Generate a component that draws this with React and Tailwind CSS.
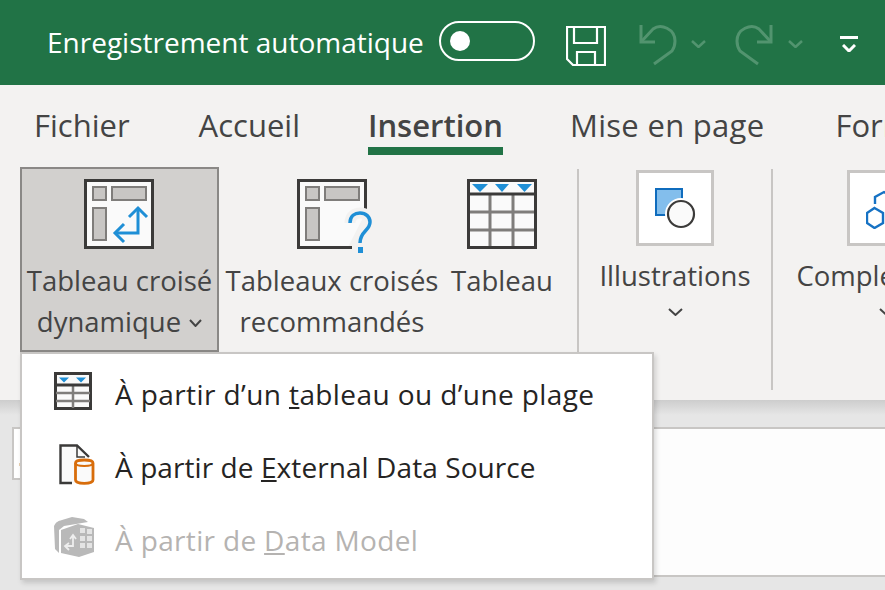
const font = "font-['Open_Sans','Noto_Sans',sans-serif]";

function Chevron({ w = 14, sw = 2, className = '' }) {
  return (
    <svg width={w} height={8} viewBox={`0 0 ${w} 8`} fill="none" stroke="currentColor" strokeWidth={sw} className={`shrink-0 ${className}`}>
      <path d={`M1 1L${w / 2} 7L${w - 1} 1`} />
    </svg>
  );
}

function SaveIcon() {
  return (
    <svg width="40" height="40" viewBox="0 0 40 40" fill="none" stroke="#fff" strokeWidth="2.2">
      <path d="M1 1H39V39H7L1 33Z" />
      <path d="M8 1V17H31V1" />
      <path d="M11 39V26H29V39" />
    </svg>
  );
}

function UndoIcon({ flip }) {
  return (
    <svg width="38" height="42" viewBox="0 0 38 42" fill="none" stroke="#52946f" strokeWidth="3" className={flip ? '-scale-x-100' : ''}>
      <path d="M2 1V18H16" />
      <path d="M2 18L14 5C22 -1 36 5 36 17C36 21 35 24 33 27L15 40" />
    </svg>
  );
}

function PivotBoxes() {
  return (
    <>
      <rect x="9" y="8" width="13" height="13" fill="#c8c6c4" stroke="#7f7d7b" strokeWidth="2" />
      <rect x="28" y="8" width="34" height="13" fill="#c8c6c4" stroke="#7f7d7b" strokeWidth="2" />
      <rect x="9" y="29" width="13" height="32" fill="#c8c6c4" stroke="#7f7d7b" strokeWidth="2" />
    </>
  );
}

function PivotIcon() {
  return (
    <svg width="70" height="70" viewBox="0 0 70 70" fill="none">
      <rect x="1.5" y="1.5" width="67" height="67" fill="#fafafa" stroke="#3b3a39" strokeWidth="3" />
      <PivotBoxes />
      <path d="M54 30V54H32" stroke="#1f8fd6" strokeWidth="3" />
      <path d="M45 38L54 29L63 38M40 45L31 54L40 63" stroke="#1f8fd6" strokeWidth="3" />
    </svg>
  );
}

function RecommendedIcon() {
  const q = 'M53 44C53 37 58 34 63 34C69 34 73 38 73 43C73 52 63 52 63 64';
  return (
    <svg width="70" height="70" viewBox="0 0 70 70" fill="none" className="overflow-visible">
      <path d="M0 0H70V31L50 70H0Z" fill="#fafafa" />
      <path d="M55 68.500H1.500V1.500H68.500V31" stroke="#3b3a39" strokeWidth="3" />
      <PivotBoxes />
      <path d={q} stroke="#f3f2f1" strokeWidth="11" />
      <path d="M63 62V74" stroke="#f3f2f1" strokeWidth="11" />
      <path d={q} stroke="#1f8fd6" strokeWidth="3.500" />
      <rect x="61" y="68" width="5" height="6" fill="#1f8fd6" />
    </svg>
  );
}

function TableIcon() {
  return (
    <svg width="70" height="70" viewBox="0 0 70 70" fill="none">
      <rect x="1.5" y="1.5" width="67" height="67" fill="#fafafa" stroke="#3b3a39" strokeWidth="3" />
      <path d="M5 5H21L13 13ZM28 5H42L35 13ZM50 5H65L57.500 13Z" fill="#1f8fd6" />
      <path d="M23 16V67M46 16V67M3 33H67M3 51H67" stroke="#7f7d7b" strokeWidth="3" />
      <path d="M2 15H68" stroke="#3b3a39" strokeWidth="3" />
    </svg>
  );
}

function ShapesIcon() {
  return (
    <svg width="42" height="42" viewBox="0 0 42 42" fill="none">
      <rect x="2" y="2" width="26" height="26" fill="#83beec" stroke="#0f6cbd" strokeWidth="2" />
      <circle cx="27" cy="27" r="16" fill="#fff" />
      <circle cx="27" cy="27" r="13" fill="#fafafa" stroke="#3b3a39" strokeWidth="2.2" />
    </svg>
  );
}

function AddinIcon() {
  return (
    <svg width="40" height="42" viewBox="0 0 40 42" fill="none" stroke="#1672c4" strokeWidth="2.4">
      <path d="M8.500 21L17 26V36L8.500 41L1 36V26Z" />
      <path d="M9 17V10L18 5L27 10" />
      <path d="M27 22L36 27V36" />
    </svg>
  );
}

function MenuTableIcon() {
  return (
    <svg width="38" height="38" viewBox="0 0 38 38" fill="none">
      <rect x="1.5" y="1.5" width="35" height="35" fill="#fafafa" stroke="#3b3a39" strokeWidth="3" />
      <path d="M5 5.500H15L10 10.500ZM22 5.500H32L27 10.500Z" fill="#1f8fd6" />
      <path d="M19 14V36M2 21H36M2 29H36" stroke="#7f7d7b" strokeWidth="2.5" />
      <path d="M2 13H36" stroke="#3b3a39" strokeWidth="3" />
    </svg>
  );
}

function DataSourceIcon() {
  return (
    <svg width="36" height="41" viewBox="0 0 36 41" fill="none">
      <path d="M1.500 39V1.500H18L31 14V39Z" fill="#fafafa" />
      <path d="M13 39H1.500V1.500H18L30 13" stroke="#3b3a39" strokeWidth="2.4" />
      <path d="M18 2V13H26" stroke="#3b3a39" strokeWidth="1.5" />
      <path d="M16.500 19C16.500 15 34 15 34 19V36C34 40.500 16.500 40.500 16.500 36Z" fill="#fafafa" stroke="#d86d0b" strokeWidth="2.8" />
      <path d="M16.500 19C16.500 23 34 23 34 19" stroke="#d86d0b" strokeWidth="2.2" />
    </svg>
  );
}

function DataModelIcon() {
  return (
    <svg width="40" height="40" viewBox="0 0 40 40" fill="none">
      <path d="M0 9C2 5 4 4 8 3L18 0L30 2L34 5L10 9L5 13V36L1 32Z" fill="#b9b9b9" />
      <path d="M7 13L24 7L40 11V35L25 40L7 36Z" fill="#b9b9b9" />
      <path d="M26 11H31V16H26ZM33 12H38V17H33ZM26 19H31V24H26ZM33 19H38V24H33ZM26 26H31V31H26ZM33 26H38V31H33Z" fill="#e4e4e4" />
      <path d="M19 19V29H12M16 22L19 18L22 22M15 26L11 29L15 33" stroke="#eee" strokeWidth="1.800" />
    </svg>
  );
}

function RibbonButton({ icon, lines, chevron, active, className = '' }) {
  return (
    <div className={`flex shrink-0 flex-col items-center border-2 pt-[10px] ${active ? 'border-[#8a8886] bg-[#d2d0ce]' : 'border-transparent'} ${className}`}>
      <div className={`h-[70px] ${active ? 'pr-[1px]' : ''}`}>{icon}</div>
      <div className="mt-[11px] text-center text-[27.5px] leading-[41px] whitespace-nowrap text-[#444]">
        {lines.map((l, i) => (
          <div key={i} className="flex items-center justify-center gap-[8px]">
            {l}
            {chevron && i === lines.length - 1 && <Chevron w={13} className="mt-[2px]" />}
          </div>
        ))}
      </div>
    </div>
  );
}

function TileGroup({ icon, label, className = '' }) {
  return (
    <div className={`flex shrink-0 flex-col items-center ${className}`}>
      <div className="flex h-[76px] w-[78px] shrink-0 items-center justify-center border-[3px] border-[#c8c6c4] bg-white">{icon}</div>
      <div className="mt-[9px] text-[27.5px] leading-[41px] whitespace-nowrap text-[#444]">{label}</div>
      <Chevron w={15} className="mt-[12px] text-[#444]" />
    </div>
  );
}

function MenuItem({ icon, iconClass, textClass, children, disabled }) {
  return (
    <div className={`flex h-[73px] items-center ${disabled ? 'text-[#b5b3b1]' : 'text-[#252423]'}`}>
      <div className={`w-[93px] shrink-0 ${iconClass}`}>{icon}</div>
      <div className={`text-[28px] whitespace-nowrap ${textClass}`}>{children}</div>
    </div>
  );
}

export default function App() {
  return (
    <div className={`relative flex h-[590px] w-[885px] flex-col overflow-hidden bg-[#e6e6e6] ${font}`}>
      <header className="flex h-[85px] shrink-0 items-center bg-[#217346] pl-[47px] text-white">
        <span className="-mt-[2px] text-[28px] whitespace-nowrap">Enregistrement automatique</span>
        <div className="ml-[15px] -mt-[3px] flex h-[40px] w-[96px] shrink-0 items-center rounded-full border-2 border-white pl-[9px]">
          <div className="h-[20px] w-[20px] rounded-full bg-white" />
        </div>
        <div className="ml-[31px] mt-[7px]"><SaveIcon /></div>
        <div className="ml-[33px] mt-[5px]"><UndoIcon /></div>
        <Chevron w={15} sw={2.5} className="ml-[14px] mt-[2px] text-[#52946f]" />
        <div className="ml-[29px] mt-[5px]"><UndoIcon flip /></div>
        <Chevron w={15} sw={2.5} className="ml-[15px] mt-[2px] text-[#52946f]" />
        <div className="ml-[37px] mt-[2px] flex flex-col items-center">
          <div className="h-[3px] w-[18px] bg-white" />
          <Chevron w={14} sw={3} className="mt-[5px]" />
        </div>
      </header>

      <section className="h-[315px] shrink-0 overflow-hidden bg-[#f3f2f1]">
        <nav className="flex h-[82px] items-start pt-[18px] pl-[34px] text-[31px] leading-[44px] whitespace-nowrap text-[#444]">
          <span>Fichier</span>
          <span className="ml-[69px]">Accueil</span>
          <span className="ml-[68px] border-b-[8px] border-[#217346] font-semibold">Insertion</span>
          <span className="ml-[67px] tracking-[0.3px]">Mise en page</span>
          <span className="ml-[71px]">Format</span>
        </nav>

        <div className="flex items-start pl-[20px]">
          <RibbonButton active className="h-[185px] w-[199px]" icon={<PivotIcon />} lines={['Tableau croisé', 'dynamique']} chevron />
          <RibbonButton className="ml-[3px] w-[220px]" icon={<RecommendedIcon />} lines={['Tableaux croisés', 'recommandés']} />
          <RibbonButton className="ml-[6px] w-[108px]" icon={<TableIcon />} lines={['Tableau']} />
          <div className="mt-[2px] ml-[21px] h-[222px] w-[2px] shrink-0 bg-[#c8c6c4]" />
          <TileGroup className="ml-[20px] mt-[3px] w-[152px]" icon={<ShapesIcon />} label="Illustrations" />
          <div className="mt-[2px] ml-[20px] h-[221px] w-[2px] shrink-0 bg-[#c8c6c4]" />
          <TileGroup className="ml-[18px] mt-[3px] w-[190px]" icon={<AddinIcon />} label="Compléments" />
        </div>
      </section>

      <div className="h-[15px] shrink-0 bg-gradient-to-b from-[#cdcdcd] to-[#e6e6e6]" />

      <div className="mt-[12px] ml-[12px] flex items-start">
        <div className="h-[53px] w-[100px] shrink-0 border-2 border-[#c8c6c4] bg-white">
          <div className="mt-[34px] ml-[5px] h-[3px] w-[2px] bg-[#e8cfb0]" />
        </div>
        <div className="ml-[100px] h-[150px] flex-1 border-y-2 border-[#c8c6c4] bg-[#fdfdfd]" />
      </div>

      <div className="absolute top-[352px] left-[20px] h-[228px] w-[634px] border-2 border-[#c8c6c4] bg-white pt-[3px] shadow-[2px_3px_5px_rgba(0,0,0,0.15)]">
        <MenuItem iconClass="pl-[32px] pb-[6px]" textClass="tracking-[0.4px]" icon={<MenuTableIcon />}>À partir d’un <u>t</u>ableau ou d’une plage</MenuItem>
        <MenuItem iconClass="pl-[37px] pb-[5px]" textClass="tracking-[0.08px]" icon={<DataSourceIcon />}>À partir de <u>E</u>xternal Data Source</MenuItem>
        <MenuItem disabled iconClass="pl-[32px] pb-[5px]" textClass="tracking-[0.34px]" icon={<DataModelIcon />}>À partir de <u>D</u>ata Model</MenuItem>
      </div>
    </div>
  );
}
